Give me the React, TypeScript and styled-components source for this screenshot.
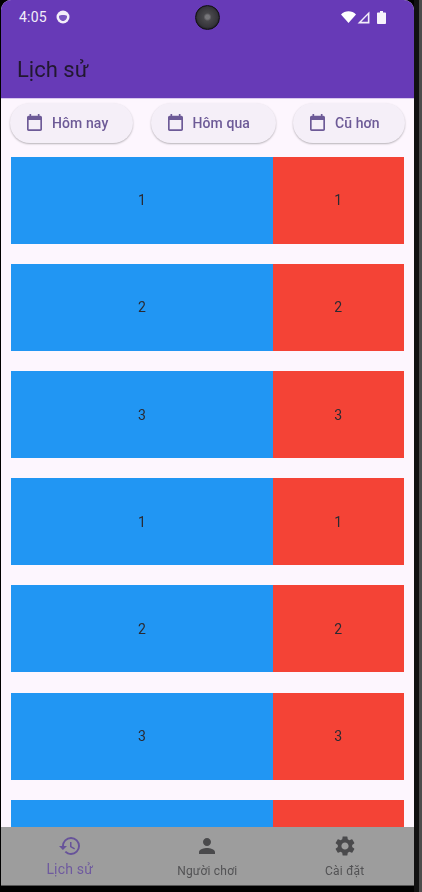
import React from "react"
import styled, { createGlobalStyle } from "styled-components"

const GlobalStyle = createGlobalStyle`
    html, body {
        margin: 0;
        padding: 0;
        background: #000;
    }
    body {
        font-family: Roboto, "Noto Sans", sans-serif;
    }
`

const Backdrop = styled.div`
    width: 422px;
    height: 892px;
    overflow: hidden;
    background: #000;
    display: flex;
`

const RightBezel = styled.div`
    width: 8px;
    height: 100%;
    border-left: 5px solid #111;
    background: #4c4c4c;
    box-sizing: border-box;
`

const Phone = styled.div`
    width: 413px;
    height: 886px;
    margin-left: 1px;
    display: flex;
    flex-direction: column;
    background: #fdf6fe;
    border-radius: 10px 10px 0 0;
    overflow: hidden;
    filter: blur(0.35px);
`

const Header = styled.header`
    height: 98px;
    flex-shrink: 0;
    background: #673ab7;
    display: flex;
    flex-direction: column;
    border-bottom: 1px solid #d9c6ee;
    box-sizing: content-box;
`

const StatusBar = styled.div`
    height: 34px;
    padding: 0 18px;
    display: grid;
    grid-template-columns: 1fr auto 1fr;
    align-items: center;
    color: #f3eef9;
`

const StatusLeft = styled.div`
    display: flex;
    align-items: center;
    gap: 9px;
    font-size: 14px;
    letter-spacing: 0.2px;
`

const StatusRight = styled.div`
    display: flex;
    align-items: center;
    justify-content: flex-end;
    gap: 1px;
    padding-right: 10px;
`

const Camera = styled.div`
    width: 25px;
    height: 25px;
    border-radius: 50%;
    background: radial-gradient(circle at 50% 48%, #77767a 0 2px, #48474b 4px, #36353a 10px, #232227 12px);
    border: 1px solid #111;
    box-sizing: border-box;
`

const Title = styled.h1`
    margin: 0;
    padding: 0 0 0 16px;
    height: 64px;
    line-height: 71px;
    font-size: 22px;
    font-weight: 400;
    color: #21182f;
`

const Body = styled.main`
    flex: 1;
    min-height: 0;
    overflow: hidden;
`

const Filters = styled.div`
    display: flex;
    justify-content: space-between;
    padding: 3.5px 9px 0 9px;
    height: 52px;
    box-sizing: border-box;
`

const FilterButton = styled.button<{ $width: number }>`
    width: ${({ $width }) => $width}px;
    height: 40px;
    border: none;
    border-radius: 20px;
    background: #f5eff8;
    box-shadow: 0 1px 2px rgba(0, 0, 0, 0.28);
    display: flex;
    align-items: center;
    gap: 10px;
    padding: 0 0 0 17px;
    color: #6d5a97;
    font-family: inherit;
    font-size: 14px;
    font-weight: 500;
    letter-spacing: 0.1px;
`

const List = styled.div`
    display: flex;
    flex-direction: column;
    gap: 20.2px;
    padding: 5.7px 10.5px 0 10px;
`

const Row = styled.div`
    display: flex;
    height: 87px;
    flex-shrink: 0;
`

const Cell = styled.div<{ $grow: number; $color: string }>`
    flex: ${({ $grow }) => $grow};
    background: ${({ $color }) => $color};
    display: flex;
    align-items: center;
    justify-content: center;
    font-size: 14px;
    color: #2a2a32;
`

const BottomNav = styled.nav`
    height: 58px;
    flex-shrink: 0;
    background: #9d9d9d;
    display: grid;
    grid-template-columns: repeat(3, 137.5px);
    border-bottom: 1px solid #555;
`

const NavItem = styled.div<{ $active?: boolean }>`
    display: flex;
    flex-direction: column;
    align-items: center;
    padding-top: 7px;
    color: ${({ $active }) => ($active ? "#67539a" : "#4a4a4c")};
    font-size: ${({ $active }) => ($active ? "14px" : "12px")};
    letter-spacing: 0.2px;
`

const NavLabel = styled.span<{ $active?: boolean }>`
    margin-top: ${({ $active }) => ($active ? "3px" : "5px")};
    line-height: 16px;
    color: ${({ $active }) => ($active ? "#6f5a9f" : "#525254")};
`

const CalendarIcon: React.FC = () => (
    <svg width="15" height="17" viewBox="3 2 18 20" fill="currentColor" preserveAspectRatio="none">
        <path d="M19 4h-1V2h-2v2H8V2H6v2H5c-1.1 0-2 .9-2 2v14c0 1.1.9 2 2 2h14c1.1 0 2-.9 2-2V6c0-1.1-.9-2-2-2zm0 16H5V9h14v11z" />
    </svg>
)

const HistoryIcon: React.FC = () => (
    <svg width="24" height="24" viewBox="0 0 24 24" fill="currentColor">
        <path d="M13 3a9 9 0 0 0-9 9H1l3.89 3.89.07.14L9 12H6c0-3.87 3.13-7 7-7s7 3.13 7 7-3.13 7-7 7c-1.93 0-3.68-.79-4.94-2.06l-1.42 1.42A8.954 8.954 0 0 0 13 21a9 9 0 0 0 0-18zm-1 5v5l4.28 2.54.72-1.21-3.5-2.08V8H12z" />
    </svg>
)

const PersonIcon: React.FC = () => (
    <svg width="24" height="24" viewBox="0 0 24 24" fill="currentColor">
        <path d="M12 12c2.21 0 4-1.79 4-4s-1.79-4-4-4-4 1.79-4 4 1.79 4 4 4zm0 2c-2.67 0-8 1.34-8 4v2h16v-2c0-2.66-5.33-4-8-4z" />
    </svg>
)

const GearIcon: React.FC = () => (
    <svg width="24" height="24" viewBox="0 0 24 24" fill="currentColor">
        <path d="M19.14 12.94c.04-.3.06-.61.06-.94 0-.32-.02-.64-.07-.94l2.03-1.58a.49.49 0 0 0 .12-.61l-1.92-3.32a.488.488 0 0 0-.59-.22l-2.39.96c-.5-.38-1.03-.7-1.62-.94l-.36-2.54a.484.484 0 0 0-.48-.41h-3.84c-.24 0-.43.17-.47.41l-.36 2.54c-.59.24-1.13.57-1.62.94l-2.39-.96c-.22-.08-.47 0-.59.22L2.74 8.87c-.12.21-.08.47.12.61l2.03 1.58c-.05.3-.09.63-.09.94s.02.64.07.94l-2.03 1.58a.49.49 0 0 0-.12.61l1.92 3.32c.12.22.37.29.59.22l2.39-.96c.5.38 1.03.7 1.62.94l.36 2.54c.05.24.24.41.48.41h3.84c.24 0 .44-.17.47-.41l.36-2.54c.59-.24 1.13-.56 1.62-.94l2.39.96c.22.08.47 0 .59-.22l1.92-3.32c.12-.22.07-.47-.12-.61l-2.01-1.58zM12 15.6c-1.98 0-3.6-1.62-3.6-3.6s1.62-3.6 3.6-3.6 3.6 1.62 3.6 3.6-1.62 3.6-3.6 3.6z" />
    </svg>
)

// the last row runs under the nav bar, its number is never visible
const rows = ["1", "2", "3", "1", "2", "3", ""]

const filters = [
    { label: "Hôm nay", width: 123 },
    { label: "Hôm qua", width: 125 },
    { label: "Cũ hơn", width: 112 },
]

export default function App() {
    return (
        <>
            <GlobalStyle />
            <Backdrop>
                <Phone>
                    <Header>
                        <StatusBar>
                            <StatusLeft>
                                4:05
                                <svg width="14" height="14" viewBox="0 0 14 14">
                                    <circle cx="7" cy="7" r="6.5" fill="#f3eef9" />
                                    <path d="M3 6c1.2-1.2 6.8-1.2 8 0 .2 2.6-1.6 5-4 5S2.8 8.6 3 6z" fill="#7a56c0" />
                                </svg>
                            </StatusLeft>
                            <Camera />
                            <StatusRight>
                                <svg width="15" height="12" viewBox="0 0 15 12">
                                    <path d="M0 3.5C4-.8 11-.8 15 3.5L7.5 12z" fill="#fff" />
                                </svg>
                                <svg width="13" height="13" viewBox="0 0 12 12">
                                    <path d="M11.5.5v11H.5z M10 3.6 4 10h6z" fill="#f3eef9" fillRule="evenodd" />
                                </svg>
                                <svg width="9" height="13" viewBox="0 0 9 13" style={{ marginLeft: 6 }}>
                                    <path d="M3 0h3v1.5h2c.5 0 1 .4 1 1V12c0 .6-.5 1-1 1H1c-.5 0-1-.4-1-1V2.5c0-.6.5-1 1-1h2z" fill="#f7f3fb" />
                                </svg>
                            </StatusRight>
                        </StatusBar>
                        <Title>Lịch sử</Title>
                    </Header>
                    <Body>
                        <Filters>
                            {filters.map(filter => (
                                <FilterButton key={filter.label} $width={filter.width}>
                                    <CalendarIcon />
                                    {filter.label}
                                </FilterButton>
                            ))}
                        </Filters>
                        <List>
                            {rows.map((n, i) => (
                                <Row key={i}>
                                    <Cell $grow={2} $color="#2196f3">{n}</Cell>
                                    <Cell $grow={1} $color="#f44336">{n}</Cell>
                                </Row>
                            ))}
                        </List>
                    </Body>
                    <BottomNav>
                        <NavItem $active>
                            <HistoryIcon />
                            <NavLabel $active>Lịch sử</NavLabel>
                        </NavItem>
                        <NavItem>
                            <PersonIcon />
                            <NavLabel>Người chơi</NavLabel>
                        </NavItem>
                        <NavItem>
                            <GearIcon />
                            <NavLabel>Cài đặt</NavLabel>
                        </NavItem>
                    </BottomNav>
                </Phone>
                <RightBezel />
            </Backdrop>
        </>
    )
}
